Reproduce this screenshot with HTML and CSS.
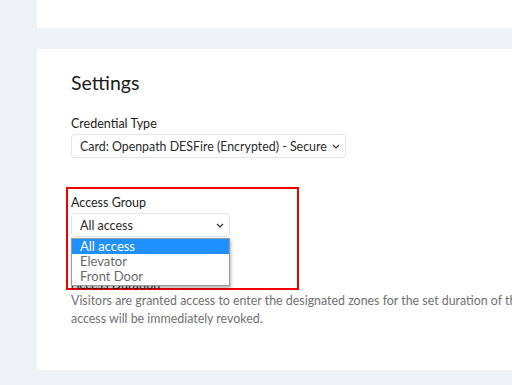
FILE: index.html
```html
<!DOCTYPE html>
<html lang="en">
<head>
    <meta charset="UTF-8">
    <meta name="viewport" content="width=device-width, initial-scale=1.0">
    <title>Settings</title>
    <link rel="stylesheet" href="styles.css">
</head>
<body>
    <div class="page">
        <div class="card top-card"></div>

        <div class="card settings-card">
            <h2 class="title">Settings</h2>

            <div class="field">
                <label class="field-label">Credential Type</label>
                <div class="select select-wide">
                    <span>Card: Openpath DESFire (Encrypted) - Secure</span>
                    <svg class="chevron" width="8" height="5" viewBox="0 0 8 5"><path d="M1 1l3 3 3-3" fill="none" stroke="#333" stroke-width="1.2"/></svg>
                </div>
            </div>

            <div class="field access-field">
                <div class="highlight-box"></div>
                <label class="field-label">Access Group</label>
                <div class="select select-narrow">
                    <span>All access</span>
                    <svg class="chevron" width="8" height="5" viewBox="0 0 8 5"><path d="M1 1l3 3 3-3" fill="none" stroke="#333" stroke-width="1.2"/></svg>
                    <ul class="dropdown">
                        <li class="selected">All access</li>
                        <li>Elevator</li>
                        <li>Front Door</li>
                    </ul>
                </div>
            </div>

            <div class="field duration-field">
                <label class="field-label">Access Duration</label>
                <p class="help">Visitors are granted access to enter the designated zones for the set duration of the visit. Once the visit ends,<br>access will be immediately revoked.</p>
            </div>
        </div>
    </div>
</body>
</html>
```

FILE: styles.css
```css
html, body {
    overflow: hidden;
}
body {
    margin: 0;
    background-color: #eef1f6;
    font-family: 'Lato', 'Liberation Sans', sans-serif;
    color: #1f1f1f;
}
.page {
    padding-left: 37px;
    width: 900px;
}
.card {
    background-color: white;
}
.top-card {
    height: 28px;
}
.settings-card {
    margin-top: 21px;
    height: 321px;
    box-sizing: border-box;
    padding: 22px 0 0 34px;
}
.title {
    margin: 0;
    font-size: 19.5px;
    line-height: 24px;
    font-weight: 400;
    color: #1a1a1a;
}
.field {
    position: relative;
}
.field-label {
    display: block;
    font-size: 12.5px;
    line-height: 16px;
    color: #222;
}
.field:nth-of-type(1) {
    margin-top: 21px;
}
.field-label + .select {
    margin-top: 2px;
}
.select {
    position: relative;
    box-sizing: border-box;
    height: 24px;
    display: flex;
    align-items: center;
    justify-content: space-between;
    gap: 4px;
    padding: 0 5px 0 8px;
    border: 1px solid #e1e4e8;
    border-radius: 4px;
    font-size: 12.4px;
    color: #2b2b2b;
    white-space: nowrap;
}
.select-narrow {
    font-size: 12.5px;
}
.select-wide {
    width: 275px;
}
.select-narrow {
    width: 159px;
}
.chevron {
    flex-shrink: 0;
}
.access-field {
    margin-top: 37px;
}
.highlight-box {
    position: absolute;
    left: -5px;
    top: -8px;
    width: 233px;
    height: 103px;
    box-sizing: border-box;
    border: 2px solid #f00000;
    pointer-events: none;
}
.dropdown {
    position: absolute;
    left: -1px;
    top: 24px;
    width: 159px;
    box-sizing: border-box;
    margin: 0;
    padding: 0 0 1px;
    list-style: none;
    background-color: white;
    border: 1px solid #9a9a9a;
    box-shadow: 1px 2px 3px rgba(0,0,0,0.3);
    z-index: 2;
}
.dropdown li {
    height: 15px;
    line-height: 15px;
    padding-left: 8px;
    font-size: 13px;
    color: #6b6b6b;
}
.dropdown li.selected {
    background-color: #1e90ff;
    color: white;
}
.duration-field {
    margin-top: 40px;
}
.help {
    margin: -1px 0 0;
    font-size: 12.4px;
    line-height: 18px;
    color: #707070;
    white-space: nowrap;
}
```
